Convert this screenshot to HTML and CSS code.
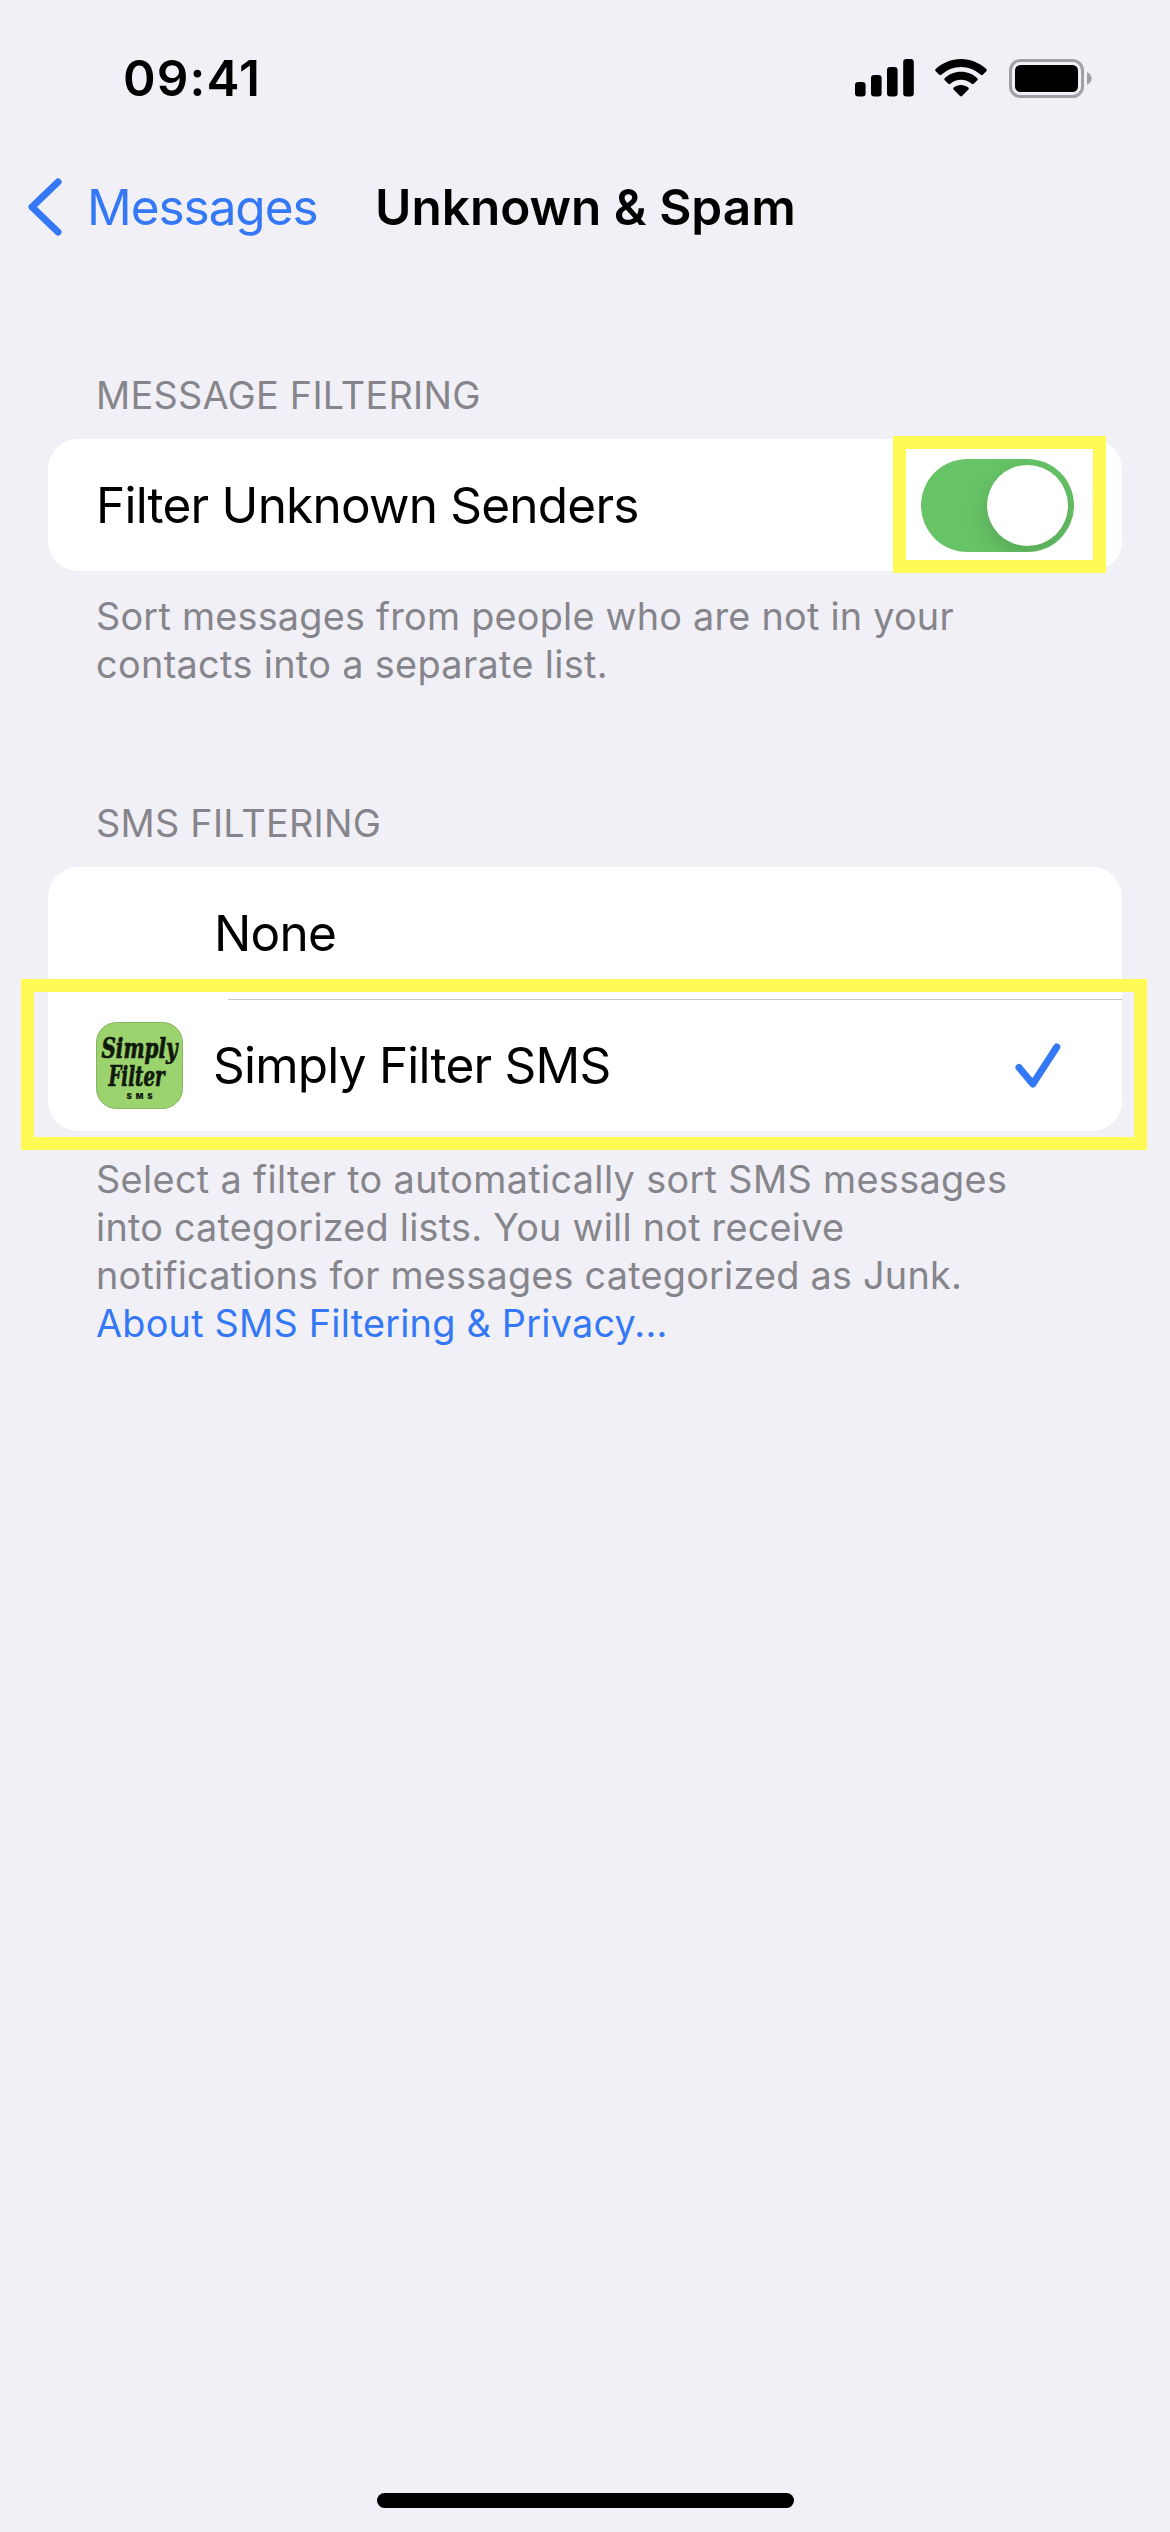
FILE: index.html
```html
<!DOCTYPE html>
<html lang="en">
<head>
<meta charset="utf-8">
<title>Unknown &amp; Spam</title>
<link rel="stylesheet" href="styles.css">
</head>
<body>
<div class="screen">
  <header class="status-bar">
    <span class="time">09:41</span>
    <div class="status-icons">
      <svg class="signal" width="59" height="38" viewBox="0 0 59 38">
        <rect x="0" y="23" width="10.6" height="14.5" rx="3.2"/>
        <rect x="16" y="16" width="10.6" height="21.5" rx="3.2"/>
        <rect x="32" y="8" width="10.6" height="29.5" rx="3.2"/>
        <rect x="48.2" y="0" width="10.6" height="37.5" rx="3.2"/>
      </svg>
      <svg class="wifi" width="52" height="38" viewBox="0 0 52 38">
        <path d="M26 0C16.300 0 7.400 3.800.700 10.100Q-.300 11.100.700 12.200L4.200 15.800Q5.100 16.700 6.200 15.800A28.700 28.700 0 0 1 45.800 15.800Q46.900 16.700 47.800 15.800L51.300 12.200Q52.300 11.100 51.300 10.100C44.600 3.800 35.700 0 26 0Z"/>
        <path d="M26 12.800C19.700 12.800 14 15.200 9.700 19.200Q8.700 20.200 9.700 21.200L13.300 24.800Q14.200 25.700 15.300 24.800A16 16 0 0 1 36.700 24.800Q37.800 25.700 38.700 24.800L42.300 21.200Q43.300 20.200 42.300 19.200C38 15.200 32.300 12.800 26 12.800Z"/>
        <path d="M26 26C23.200 26 20.700 27 18.700 28.500Q17.700 29.400 18.600 30.400L25 37Q26 37.900 27 37L33.400 30.400Q34.300 29.400 33.300 28.500C31.300 27 28.800 26 26 26Z"/>
      </svg>
      <svg class="battery" width="83" height="39" viewBox="0 0 83 39">
        <rect x="1.500" y="1.500" width="72" height="36" rx="10" fill="none" stroke="#a09fa5" stroke-width="3"/>
        <rect x="6" y="6" width="63" height="27" rx="5.500"/>
        <path d="M78 13.200C81 14.400 82.600 16.800 82.600 19.500S81 24.700 78 25.900Z" fill="#a09fa5"/>
      </svg>
    </div>
  </header>

  <nav class="nav-bar">
    <a class="back">
      <svg width="34" height="58" viewBox="0 0 34 58"><path d="M30 4 4 29 30 54" fill="none" stroke="#3478f6" stroke-width="7" stroke-linecap="round" stroke-linejoin="round"/></svg>
      <span class="back-label">Messages</span>
    </a>
    <h1 class="title">Unknown &amp; Spam</h1>
  </nav>

  <main>
    <section class="group">
      <h2 class="group-header">MESSAGE FILTERING</h2>
      <div class="card">
        <div class="row">
          <span class="label">Filter Unknown Senders</span>
          <div class="toggle"><div class="knob"></div></div>
        </div>
        <div class="highlight highlight-toggle"></div>
      </div>
      <p class="note">Sort messages from people who are not in your<br><span class="loose">contacts into a separate list.</span></p>
    </section>

    <section class="group">
      <h2 class="group-header">SMS FILTERING</h2>
      <div class="card">
        <div class="row row-option">
          <span class="label label-none">None</span>
        </div>
        <div class="row row-option">
          <svg class="app-icon" width="87" height="87" viewBox="0 0 87 87">
            <rect x=".5" y=".5" width="86" height="86" rx="20" fill="#9bd36f" stroke="#86b463"/>
            <g class="logo-script">
              <text x="5.500" y="35.500" textLength="76" lengthAdjust="spacingAndGlyphs">Simply</text>
              <text x="12.500" y="64" textLength="56" lengthAdjust="spacingAndGlyphs">Filter</text>
            </g>
            <text class="logo-sms" x="30.500" y="76.800" textLength="26">SMS</text>
          </svg>
          <span class="label">Simply Filter SMS</span>
          <svg class="check" width="46" height="45" viewBox="0 0 46 45"><path d="M4 24.500 17.800 41 41.800 4" fill="none" stroke="#3478f6" stroke-width="7" stroke-linecap="round" stroke-linejoin="round"/></svg>
        </div>
        <div class="highlight highlight-row"></div>
      </div>
      <p class="note note-sms"><span class="loose">Select a filter to automatically sort SMS messages</span><br>into categorized lists. You will not receive<br>notifications for messages categorized as Junk.<br><a class="link">About SMS Filtering &amp; Privacy...</a></p>
    </section>
  </main>

  <div class="home-indicator"></div>
</div>
</body>
</html>
```
FILE: styles.css
```css
* { box-sizing: border-box; }

body {
  margin: 0;
  background: #f1f0f6;
  color: #000;
  font-family: Inter, "Liberation Sans", sans-serif;
  font-size: 49.5px;
}

.screen {
  width: 1170px;
  height: 2532px;
  display: flex;
  flex-direction: column;
  overflow: hidden;
}

h1, h2, p { margin: 0; font-weight: 400; }

.status-bar {
  height: 156px;
  padding: 0 78px 0 123px;
  display: flex;
  align-items: center;
  justify-content: space-between;
}

.time { font-weight: 600; letter-spacing: 1.1px; }

.status-icons { display: flex; align-items: center; }
.wifi { margin-left: 21px; }
.battery { margin-left: 22px; }

.nav-bar {
  height: 102px;
  padding-left: 28px;
  display: flex;
  align-items: center;
}

.back {
  width: 347px;
  display: flex;
  align-items: center;
  gap: 25px;
  color: #3478f6;
  letter-spacing: -1.05px;
}

.title { font-size: 49.5px; font-weight: 600; white-space: nowrap; }

main { flex: 1; padding: 113px 48px 0; }

.group + .group { margin-top: 111px; }

.group-header {
  padding-left: 48px;
  margin-bottom: 20px;
  font-size: 37.8px;
  line-height: 48px;
  letter-spacing: .27px;
  color: #86858b;
}

.card {
  position: relative;
  border-radius: 30px;
  background: #fff;
}

.row {
  height: 132px;
  padding: 0 48px;
  display: flex;
  align-items: center;
  justify-content: space-between;
}

.row-option { justify-content: flex-start; }
.label-none { margin-left: 118px; }
.app-icon { flex: none; margin-right: 30px; }
.check { margin-left: auto; margin-right: 13px; }
.label { white-space: nowrap; letter-spacing: -.78px; }

.row-option + .row-option {
  background: linear-gradient(#c6c6c8, #c6c6c8) 180px 0 / 894px 1px no-repeat;
}

.toggle {
  width: 153px;
  height: 93px;
  padding: 6px;
  border-radius: 47px;
  background: #67c466;
  display: flex;
  justify-content: flex-end;
  overflow: hidden;
}

.knob {
  width: 81px;
  height: 81px;
  border-radius: 50%;
  background: #fff;
  box-shadow: 0 9px 24px rgba(0, 0, 0, .16);
}

.highlight { position: absolute; border: 13px solid #fffb54; }
.highlight-toggle { left: 845px; top: -3px; width: 213px; height: 137px; }
.highlight-row { left: -27px; top: 112px; width: 1126px; height: 171px; }

.note {
  padding: 21px 0 0 48px;
  font-size: 37.8px;
  line-height: 48px;
  letter-spacing: .23px;
  color: #86858b;
  white-space: nowrap;
}
.note-sms { padding-top: 24px; }
.loose { letter-spacing: .35px; }
.link { color: #3478f6; }

.logo-script {
  font-family: "DejaVu Serif Condensed", "DejaVu Serif", serif;
  font-size: 27px;
  font-weight: 700;
  font-style: italic;
  fill: #10190b;
  stroke: #10190b;
  stroke-width: .7px;
}
.logo-sms { font: 900 8px Inter, sans-serif; fill: #10190b; }

.home-indicator {
  width: 417px;
  height: 15px;
  margin: 0 auto 24px;
  border-radius: 8px;
  background: #000;
}
```
